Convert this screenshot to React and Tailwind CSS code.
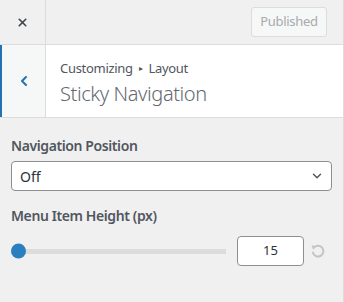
import { ChevronLeft, ChevronDown, X } from "lucide-react";

export default function App() {
  return (
    <div
      className="w-[344px] h-[302px] bg-[#f0f0f1] border-r border-[#dcdcde] text-[#50575e] overflow-hidden"
      style={{ fontFamily: '"Noto Sans", "Open Sans", sans-serif' }}
    >
      {/* top bar */}
      <div className="flex h-[45px] border-b border-[#dcdcde]">
        <button className="w-[46px] h-full flex items-center justify-center border-r border-[#dcdcde]">
          <X className="w-[13px] h-[13px] text-[#3c434a]" strokeWidth={3} />
        </button>
        <div className="flex-1 flex items-center justify-end pr-[16px]">
          <button className="h-[30px] w-[76px] rounded-[3px] border border-[#dcdcde] bg-[#f6f7f7] text-[13px] text-[#a7aaad] tracking-[-0.3px]">
            Published
          </button>
        </div>
      </div>

      {/* section title */}
      <div className="flex h-[73px] bg-white border-b border-[#dcdcde]">
        <button className="w-[46px] h-full flex items-center justify-center bg-[#f6f7f7] border-l-2 border-l-[#2271b1] border-r border-[#dcdcde]">
          <ChevronLeft className="w-[16px] h-[16px] text-[#2271b1]" strokeWidth={3} />
        </button>
        <div className="flex flex-col justify-center pl-[14px] pt-[5px]">
          <div className="text-[13px] leading-[18px] tracking-[-0.3px] text-[#50575e] flex items-center gap-[6px]">
            <span>Customizing</span>
            <span className="text-[8px]">▸</span>
            <span>Layout</span>
          </div>
          <div className="text-[20px] leading-[28px] font-light tracking-[-0.4px] text-[#646970] mt-[3px]">
            Sticky Navigation
          </div>
        </div>
      </div>

      {/* controls */}
      <div className="px-[11px] pt-[18px]">
        <div className="text-[14px] leading-[20px] font-semibold tracking-[-0.4px]">
          Navigation Position
        </div>
        <div className="mt-[5px] h-[30px] flex items-center justify-between bg-white border border-[#8c8f94] rounded-[4px] pl-[8px] pr-[7px]">
          <span className="text-[14px] text-[#2c3338]">Off</span>
          <ChevronDown className="w-[14px] h-[14px] text-[#50575e]" strokeWidth={2.5} />
        </div>

        <div className="mt-[15px] text-[14px] leading-[20px] font-semibold tracking-[-0.4px]">
          Menu Item Height (px)
        </div>
        <div className="mt-[10px] flex items-center h-[30px]">
          <div className="relative w-[215px] h-[5px] bg-[#dcdcdc]">
            <div className="absolute left-0 top-1/2 -translate-y-1/2 w-[15px] h-[15px] rounded-full bg-[#2a7fc0]" />
          </div>
          <div className="ml-[11px] w-[67px] h-[30px] bg-white border border-[#8c8f94] rounded-[4px] flex items-center justify-center text-[13px] text-[#2c3338]">
            15
          </div>
          <svg className="ml-[6px]" width="16" height="16" viewBox="0 0 16 16" fill="none">
            <path
              d="M4.2 4.3A5.4 5.4 0 1 1 2.8 9.6"
              stroke="#c3c4c7"
              strokeWidth="2"
              strokeLinecap="round"
            />
            <path d="M1.5 2.2L6.2 3.2 3.2 6.8Z" fill="#c3c4c7" />
          </svg>
        </div>
      </div>
    </div>
  );
}
